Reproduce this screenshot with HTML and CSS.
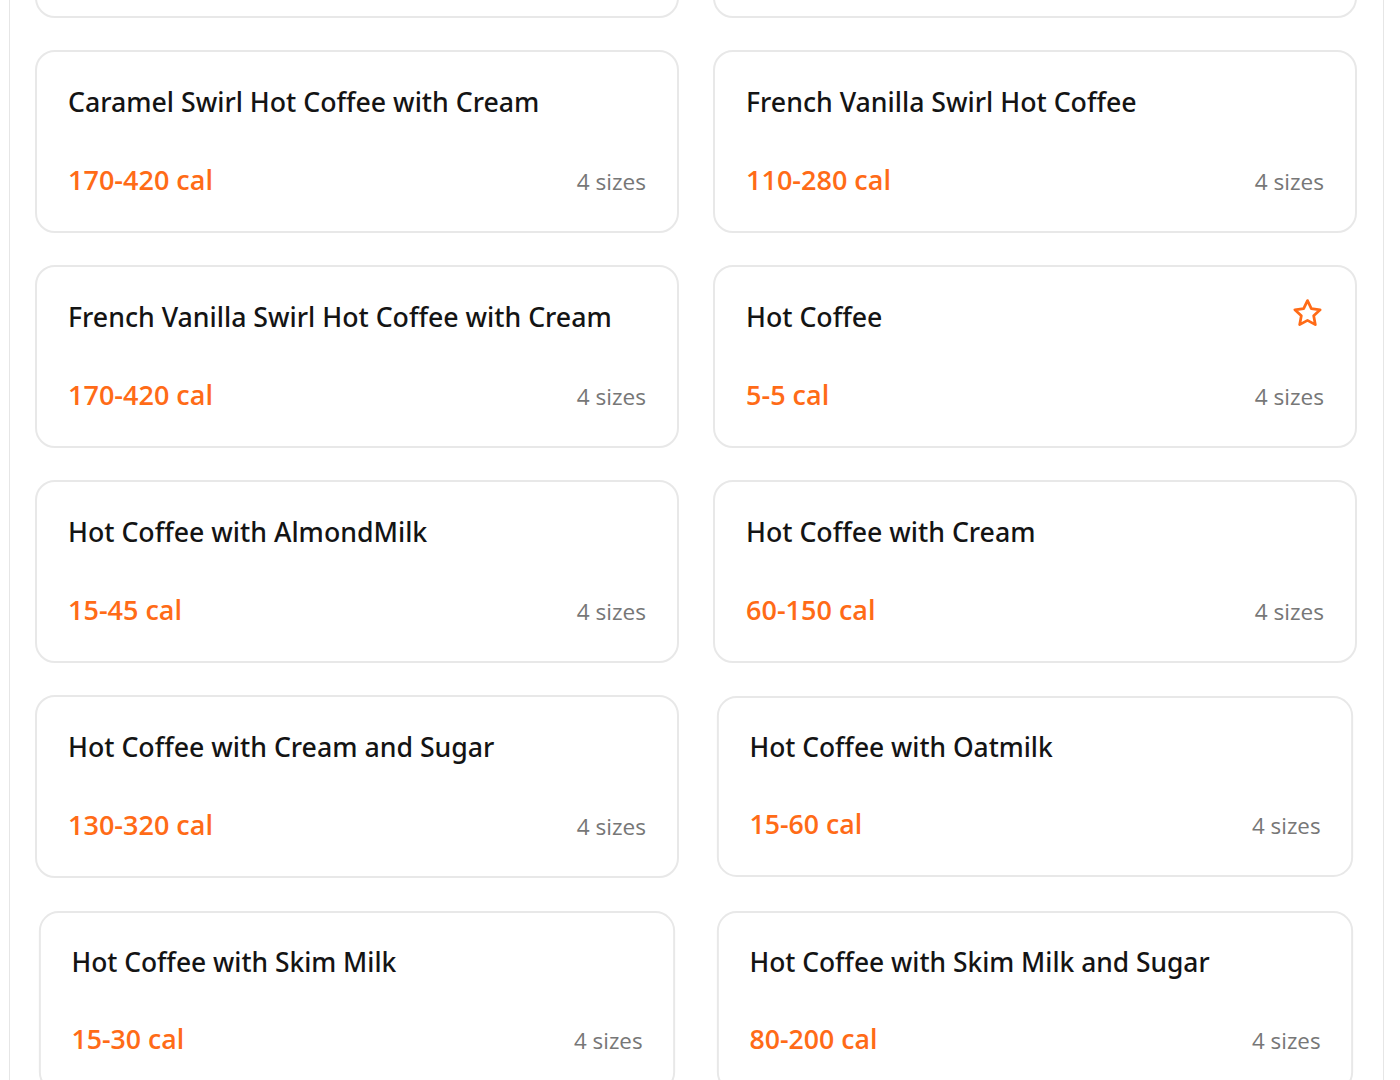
FILE: index.html
```html
<!DOCTYPE html>
<html>
<head>
<meta charset="utf-8">
<link rel="stylesheet" href="styles.css">
</head>
<body>
<div class="panel">
  <div class="grid">
    <div class="card"><div class="head"><div class="title">Caramel Swirl Hot Coffee</div></div><div class="foot"><span class="cal">170-420 cal</span><span class="sizes">4 sizes</span></div></div>
    <div class="card"><div class="head"><div class="title">Caramel Swirl Hot Coffee</div></div><div class="foot"><span class="cal">170-420 cal</span><span class="sizes">4 sizes</span></div></div>

    <div class="card"><div class="head"><div class="title">Caramel Swirl Hot Coffee with Cream</div></div><div class="foot"><span class="cal">170-420 cal</span><span class="sizes">4 sizes</span></div></div>
    <div class="card"><div class="head"><div class="title">French Vanilla Swirl Hot Coffee</div></div><div class="foot"><span class="cal">110-280 cal</span><span class="sizes">4 sizes</span></div></div>

    <div class="card"><div class="head"><div class="title">French Vanilla Swirl Hot Coffee with Cream</div></div><div class="foot"><span class="cal">170-420 cal</span><span class="sizes">4 sizes</span></div></div>
    <div class="card"><div class="head"><div class="title">Hot Coffee</div>
      <svg class="star" viewBox="0 0 24 24" width="33" height="33"><path d="M12 2.6l2.8 5.9 6.4.8-4.7 4.4 1.2 6.4L12 17l-5.7 3.1 1.2-6.4-4.7-4.4 6.4-.8z" fill="none" stroke="#ff6b17" stroke-width="2" stroke-linejoin="round"/></svg>
    </div><div class="foot"><span class="cal">5-5 cal</span><span class="sizes">4 sizes</span></div></div>

    <div class="card"><div class="head"><div class="title">Hot Coffee with AlmondMilk</div></div><div class="foot"><span class="cal">15-45 cal</span><span class="sizes">4 sizes</span></div></div>
    <div class="card"><div class="head"><div class="title">Hot Coffee with Cream</div></div><div class="foot"><span class="cal">60-150 cal</span><span class="sizes">4 sizes</span></div></div>

    <div class="card"><div class="head"><div class="title">Hot Coffee with Cream and Sugar</div></div><div class="foot"><span class="cal">130-320 cal</span><span class="sizes">4 sizes</span></div></div>
    <div class="card shrink"><div class="head"><div class="title">Hot Coffee with Oatmilk</div></div><div class="foot"><span class="cal">15-60 cal</span><span class="sizes">4 sizes</span></div></div>

    <div class="card shrink"><div class="head"><div class="title">Hot Coffee with Skim Milk</div></div><div class="foot"><span class="cal">15-30 cal</span><span class="sizes">4 sizes</span></div></div>
    <div class="card shrink"><div class="head"><div class="title">Hot Coffee with Skim Milk and Sugar</div></div><div class="foot"><span class="cal">80-200 cal</span><span class="sizes">4 sizes</span></div></div>
  </div>
</div>
</body>
</html>
```

FILE: styles.css
```css
html, body {
  margin: 0;
  padding: 0;
  background: #ffffff;
  overflow: hidden;
}
body {
  font-family: "Open Sans", "Noto Sans", sans-serif;
  color: #111111;
}
.panel {
  margin-left: 9px;
  width: 1373px;
  min-height: 1400px;
  border-left: 1px solid #e6e6e6;
  border-right: 1px solid #e6e6e6;
  box-sizing: content-box;
  margin-top: -165px;
}
.grid {
  display: grid;
  grid-template-columns: 644px 644px;
  column-gap: 34px;
  row-gap: 32px;
  padding: 0 26px 0 25px;
}
.card {
  box-sizing: border-box;
  height: 183px;
  border: 2px solid #e8e8e8;
  border-radius: 20px;
  background: #fff;
  padding: 31px 31px 0 31px;
}
.card.shrink {
  transform: scale(0.988);
}
.head {
  display: flex;
  justify-content: space-between;
  align-items: flex-start;
  height: 38px;
}
.title {
  font-family: "Noto Sans", "Open Sans", sans-serif;
  font-size: 26.7px;
  line-height: 38px;
  font-weight: 500;
  color: #141414;
  white-space: nowrap;
}
.star {
  margin-top: -1px;
  margin-right: 0px;
}
.foot {
  display: flex;
  justify-content: space-between;
  align-items: baseline;
  margin-top: 40px;
}
.cal {
  font-size: 27px;
  line-height: 38px;
  font-weight: 600;
  color: #ff6b17;
}
.sizes {
  font-size: 22.6px;
  color: #777777;
}
```
